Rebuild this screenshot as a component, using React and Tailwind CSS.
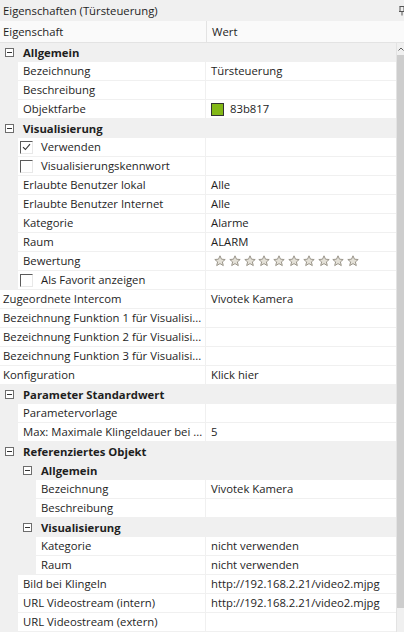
import React from 'react';

const rows = [
    { type: 'group', depth: 0, name: 'Allgemein' },
    { type: 'prop', depth: 1, name: 'Bezeichnung', value: 'Türsteuerung' },
    { type: 'prop', depth: 1, name: 'Beschreibung', value: '' },
    { type: 'color', depth: 1, name: 'Objektfarbe', value: '83b817' },
    { type: 'group', depth: 0, name: 'Visualisierung' },
    { type: 'check', depth: 1, name: 'Verwenden', checked: true },
    { type: 'check', depth: 1, name: 'Visualisierungskennwort', checked: false },
    { type: 'prop', depth: 1, name: 'Erlaubte Benutzer lokal', value: 'Alle' },
    { type: 'prop', depth: 1, name: 'Erlaubte Benutzer Internet', value: 'Alle' },
    { type: 'prop', depth: 1, name: 'Kategorie', value: 'Alarme' },
    { type: 'prop', depth: 1, name: 'Raum', value: 'ALARM' },
    { type: 'stars', depth: 1, name: 'Bewertung' },
    { type: 'check', depth: 1, name: 'Als Favorit anzeigen', checked: false },
    { type: 'prop', depth: 0, name: 'Zugeordnete Intercom', value: 'Vivotek Kamera' },
    { type: 'prop', depth: 0, name: 'Bezeichnung Funktion 1 für Visualisi...', value: '' },
    { type: 'prop', depth: 0, name: 'Bezeichnung Funktion 2 für Visualisi...', value: '' },
    { type: 'prop', depth: 0, name: 'Bezeichnung Funktion 3 für Visualisi...', value: '' },
    { type: 'prop', depth: 0, name: 'Konfiguration', value: 'Klick hier' },
    { type: 'group', depth: 0, name: 'Parameter Standardwert' },
    { type: 'prop', depth: 1, name: 'Parametervorlage', value: '' },
    { type: 'prop', depth: 1, name: 'Max: Maximale Klingeldauer bei ...', value: '5' },
    { type: 'group', depth: 0, name: 'Referenziertes Objekt' },
    { type: 'group', depth: 1, name: 'Allgemein' },
    { type: 'prop', depth: 2, name: 'Bezeichnung', value: 'Vivotek Kamera' },
    { type: 'prop', depth: 2, name: 'Beschreibung', value: '' },
    { type: 'group', depth: 1, name: 'Visualisierung' },
    { type: 'prop', depth: 2, name: 'Kategorie', value: 'nicht verwenden' },
    { type: 'prop', depth: 2, name: 'Raum', value: 'nicht verwenden' },
    { type: 'prop', depth: 1, name: 'Bild bei Klingeln', value: 'http://192.168.2.21/video2.mjpg' },
    { type: 'prop', depth: 1, name: 'URL Videostream (intern)', value: 'http://192.168.2.21/video2.mjpg' },
    { type: 'prop', depth: 1, name: 'URL Videostream (extern)', value: '' },
];

const gutters = ['w-0', 'w-[18px]', 'w-[36px]'];

function MinusBox() {
    return (
        <span className="relative flex h-[9px] w-[9px] items-center justify-center border border-[#6d6d6d] bg-white">
            <span className="h-px w-[5px] bg-[#333]"></span>
        </span>
    );
}

function CheckBox({ checked }) {
    return (
        <span className="flex h-[13px] w-[13px] items-center justify-center border-l border-t border-[#5a5a5a] border-r border-b border-r-[#e8e8e8] border-b-[#e8e8e8] bg-white">
            {checked && (
                <svg width="9" height="8" viewBox="0 0 9 8">
                    <path d="M1 4.2 L3.4 6.5 L8 1.2" fill="none" stroke="#333" strokeWidth="1.1" />
                </svg>
            )}
        </span>
    );
}

function Star() {
    return (
        <svg width="12" height="12" viewBox="0 0 12 12">
            <path
                d="M6 0.8 L7.5 4.2 L11.2 4.5 L8.4 6.9 L9.3 10.6 L6 8.6 L2.7 10.6 L3.6 6.9 L0.8 4.5 L4.5 4.2 Z"
                fill="#e4e1d8"
                stroke="#9a958a"
                strokeWidth="1"
                strokeLinejoin="round"
            />
        </svg>
    );
}

function Row({ row }) {
    if (row.type === 'group') {
        return (
            <div className="flex h-[19px] items-center bg-[#f0f0f0]">
                <div className={`${gutters[row.depth]} shrink-0`}></div>
                <div className="flex w-[18px] shrink-0 justify-center pl-px">
                    <MinusBox />
                </div>
                <span className="pl-[5px] font-bold text-[#1e1e1e]">{row.name}</span>
            </div>
        );
    }

    return (
        <div className="flex h-[19px]">
            <div className={`${gutters[row.depth]} shrink-0 bg-[#f0f0f0]`}></div>
            <div className="flex w-0 flex-1 items-center overflow-hidden whitespace-nowrap border-b border-r border-[#f0f0f0]">
                {row.type === 'check' ? (
                    <>
                        <span className="pl-[2px]"><CheckBox checked={row.checked} /></span>
                        <span className="pl-[8px]">{row.name}</span>
                    </>
                ) : (
                    <span className={row.depth === 0 ? 'pl-[3px]' : 'pl-[5px]'}>{row.name}</span>
                )}
            </div>
            <div className="flex w-[190px] shrink-0 items-center overflow-hidden whitespace-nowrap border-b border-[#f0f0f0] pl-[5px]">
                {row.type === 'color' && (
                    <>
                        <span className="h-[13px] w-[13px] border border-[#333] bg-[#83b817]"></span>
                        <span className="pl-[6px]">{row.value}</span>
                    </>
                )}
                {row.type === 'stars' && (
                    <div className="flex gap-[2.8px] pl-[3px]">
                        {Array.from({ length: 10 }).map((_, i) => (
                            <Star key={i} />
                        ))}
                    </div>
                )}
                {(row.type === 'prop') && <span>{row.value}</span>}
            </div>
        </div>
    );
}

export default function App() {
    return (
        <div className="h-[633px] w-[404px] overflow-hidden bg-white text-[11.3px] leading-none text-[#1e1e1e]" style={{ fontFamily: '"Open Sans", "Noto Sans", sans-serif' }}>
            <div className="flex h-[21px] items-center justify-between bg-[#f0f0f0] pl-[3px]">
                <span>Eigenschaften (Türsteuerung)</span>
                <svg width="8" height="10" viewBox="0 0 8 10" className="mr-[-2px]">
                    <path d="M1.5 0.5 H6.5 M2 0.5 V5.5 H6 V0.5 M1 5.5 H7 M4 5.5 V9.5" fill="none" stroke="#555" strokeWidth="1" />
                </svg>
            </div>
            <div className="flex h-[22px] border-b border-[#e3e3e3] bg-[#fafafa]">
                <div className="flex w-[207px] items-center border-r border-[#e3e3e3] pl-[3px]">Eigenschaft</div>
                <div className="flex flex-1 items-center pl-[5px]">Wert</div>
            </div>
            <div className="flex">
                <div className="w-0 flex-1">
                    {rows.map((row, i) => (
                        <Row key={i} row={row} />
                    ))}
                </div>
                <div className="flex w-[8px] shrink-0 flex-col border-l border-[#e3e3e3] bg-[#f0f0f0]">
                    <div className="flex h-[12px] items-center justify-center">
                        <svg width="6" height="4" viewBox="0 0 6 4">
                            <path d="M0.5 3.5 L3 1 L5.5 3.5" fill="none" stroke="#606060" strokeWidth="1" />
                        </svg>
                    </div>
                    <div className="h-[553px] bg-[#cdcdcd]"></div>
                </div>
            </div>
        </div>
    );
}
